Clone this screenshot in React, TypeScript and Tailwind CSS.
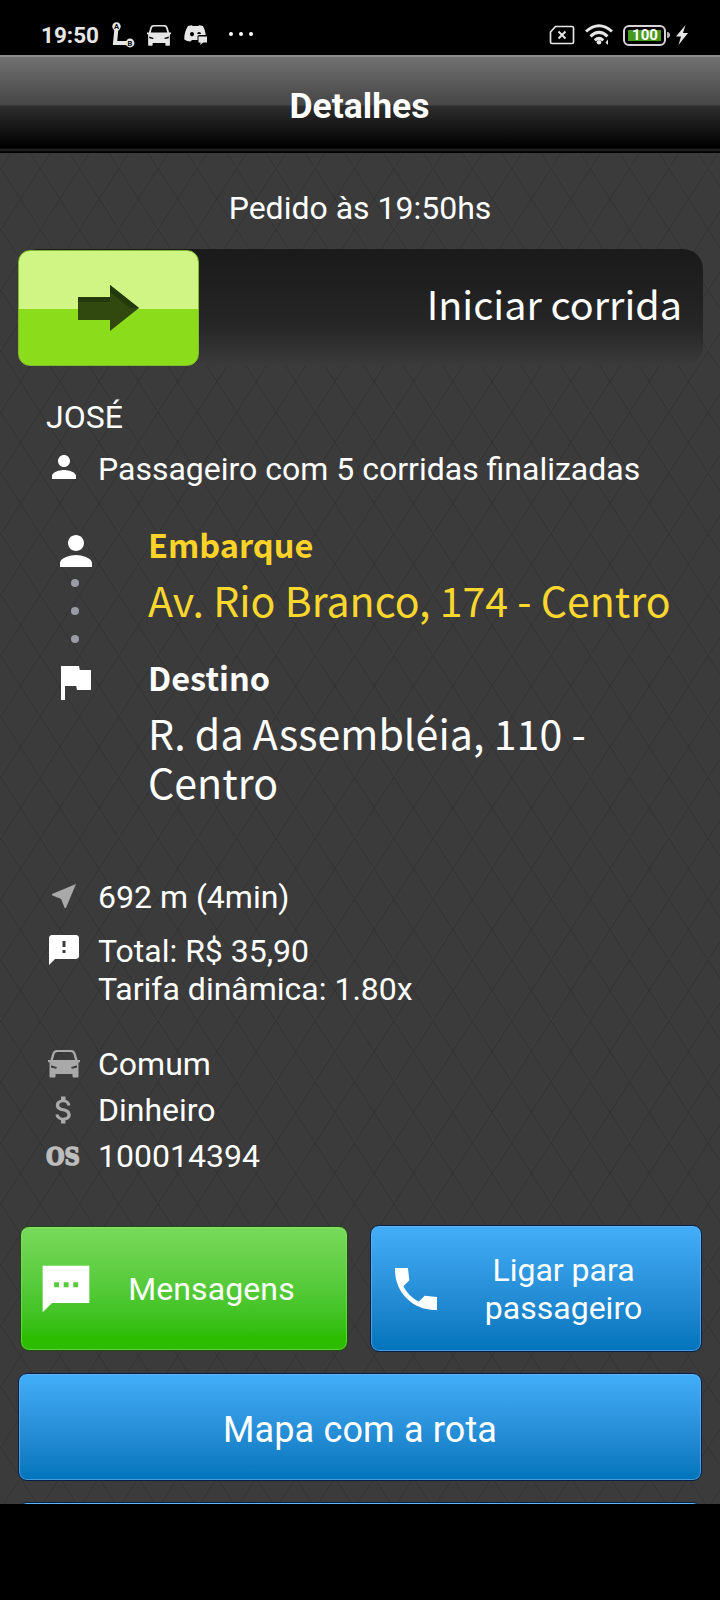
import React from "react";
import {
  MdPerson,
  MdFlag,
  MdNearMe,
  MdAttachMoney,
  MdFeedback,
} from "react-icons/md";

const roboto = "font-['Roboto',sans-serif]";
const source = "font-['Noto_Sans_CJK_SC',sans-serif]";

type IconProps = {
  className: string;
};

const Car = ({ className }: IconProps) => (
  <svg viewBox="0 0 32 28" className={className} fill="currentColor">
    <path
      fillRule="evenodd"
      d="M9 0h14c3 0 4 1.500 5 4.500l1.500 5.500H32v2l-1.500.6V26.500q0 1-1 1h-4q-1 0-1-1V24H7.500v2.500q0 1-1 1h-4q-1 0-1-1V12.600L0 12v-2h2.500L4 4.500C5 1.500 6 0 9 0zM9.500 2C7.500 2 7 3 6.400 4.600L5 10h22l-1.400-5.400C25 3 24.500 2 22.500 2zM3 15.200v2.300l5 1.200 1-1.500zM29 15.200v2.300l-5 1.200-1-1.500z"
    />
  </svg>
);

const Sms = ({ className }: IconProps) => (
  <svg viewBox="0 0 24 24" className={className} fill="currentColor">
    <path d="M22 2H2v20l4-4h16V2zM9 11.200H6.900V9.100H9zm4.100 0H11V9.100h2.100zm4.100 0h-2.100V9.100h2.100z" fillRule="evenodd" />
  </svg>
);

const Phone = ({ className }: IconProps) => (
  <svg viewBox="0 0 24 24" className={className} fill="currentColor">
    <path d="M21 15.460l-5.270-.610-2.520 2.520c-2.830-1.440-5.150-3.750-6.590-6.590l2.530-2.530L8.540 3H3.030C2.450 13.180 10.820 21.550 21 20.970v-5.510z" />
  </svg>
);

const StatusBar = () => (
  <div className="flex h-[55px] shrink-0 items-center bg-black pt-[15px] pr-8 pl-[41px] text-[#e6e6e6]">
    <span className="w-[59px] text-[22.5px] leading-none font-bold whitespace-nowrap">19:50</span>
    <svg viewBox="0 0 24 26" className="ml-[11px] h-[26px] w-6">
      <path d="M5.500 6L4 21H19" fill="none" stroke="currentColor" strokeWidth="4" />
      <circle cx="5.500" cy="4.500" r="4.200" fill="currentColor" />
      <circle cx="19" cy="21" r="4.400" fill="currentColor" />
      <text x="5.500" y="7.200" textAnchor="middle" fontSize="7.500" fontWeight="700" fill="#000">A</text>
      <text x="19" y="23.700" textAnchor="middle" fontSize="7.500" fontWeight="700" fill="#000">B</text>
    </svg>
    <Car className="ml-3 h-[21px] w-6" />
    <svg viewBox="0 0 24 20" className="ml-[13px] h-5 w-6" fill="currentColor">
      <path fillRule="evenodd" d="M4 1L7.500.2 9 1h5l1.500-.8L19 1q2 3.500 2.800 9H15q-1.500 0-1.500 1.500v3.500H8l-1.500 1.600Q3 16.600.3 14.500 0 7 4 1zM8 7a2 2.200 0 1 0 .01 0zM15 7a2 2 0 0 0-1.800 2h3.800a2 2 0 0 0-2-2z" />
      <path d="M14.500 11.500h8.500v6h-4l-2.500 2.500v-2.500h-2z" />
    </svg>
    <div className="-mt-0.5 ml-[21px] flex gap-1.5">
      <i className="h-1 w-1 rounded-full bg-white" />
      <i className="h-1 w-1 rounded-full bg-white" />
      <i className="h-1 w-1 rounded-full bg-white" />
    </div>
    <svg viewBox="0 0 26 20" className="ml-auto h-5 w-[26px]" fill="none" stroke="currentColor" strokeWidth="1.700">
      <path d="M6.500 1.500H23q1.500 0 1.500 1.500v14q0 1.500-1.500 1.500H3Q1.500 18.500 1.500 17V7z" />
      <path d="M9.500 6.500l7 7M16.500 6.500l-7 7" strokeWidth="2" />
    </svg>
    <svg viewBox="0 0 28 22" className="ml-[10px] h-[22px] w-7" fill="none" stroke="currentColor" strokeWidth="3">
      <path d="M1 7.500Q14-4 27 7.500M5.500 12.300Q14 4.500 22.500 12.300M9.800 16.300Q14 12.500 18.200 16.300" />
      <circle cx="14" cy="18.300" r="2.300" fill="currentColor" stroke="none" />
      <path d="M23 15.500v5.500l-2.500-2.500z" fill="currentColor" stroke="none" />
    </svg>
    <div className="ml-[10px] flex h-[21px] w-[43px] items-center rounded-[6px] border-[2.5px] border-[#d9d3d9] p-[3px]">
      <span className="h-full w-full bg-[#46991a] pl-px text-center text-[15px] leading-[11px] font-bold text-white">
        100
      </span>
    </div>
    <i className="ml-px h-1.5 w-[3px] rounded-r-sm bg-[#bdb7bd]" />
    <svg viewBox="0 0 12 20" className="ml-[6px] h-5 w-3" fill="currentColor">
      <path d="M9.500 0L0 11.500h5L2.500 20 12 8H7z" />
    </svg>
  </div>
);

const Header = () => (
  <header className="flex h-[98px] shrink-0 items-center justify-center border-t-2 border-[#8c8c8c] bg-[linear-gradient(to_bottom,#717171_0%,#464646_50%,#2e2e2e_51%,#000_94%,#000_95%,#222_96%,#222_97%,#000_99%)]">
    <h1 className="pt-[3px] pr-px text-[35.5px] leading-none font-bold text-white">Detalhes</h1>
  </header>
);

const Pattern = () => (
  <svg className="absolute inset-0 h-full w-full">
    <defs>
      <pattern id="argyle" x="20.500" y="45.300" width="39.300" height="60.900" patternUnits="userSpaceOnUse">
        <path d="M0 0L39.300 60.900M39.300 0L0 60.900" stroke="#333333" strokeWidth="1.300" />
        <path d="M1.200 0L40.500 60.900M38.100 0L-1.200 60.900" stroke="#404040" strokeWidth=".6" />
      </pattern>
    </defs>
    <rect width="100%" height="100%" fill="url(#argyle)" />
  </svg>
);

type InfoRowProps = {
  icon: React.ReactNode;
  className?: string;
  children: React.ReactNode;
};

const InfoRow = ({ icon, className = "", children }: InfoRowProps) => (
  <div className={`flex text-[32px] leading-[38px] whitespace-nowrap ${className}`}>
    <div className="flex h-[38px] w-[52px] shrink-0 items-center text-[#a9a9a9]">{icon}</div>
    <div>{children}</div>
  </div>
);

const blueButton =
  "rounded-[9px] border border-[#04204a] bg-linear-to-b from-[#43aef9] to-[#0074bb] shadow-[inset_0_0_0_1px_rgba(120,180,240,0.6)]";

export default function App() {
  return (
    <div className={`flex h-[1600px] w-[720px] flex-col overflow-hidden bg-black text-white ${roboto}`}>
      <StatusBar />
      <Header />
      <main className="relative h-[1351px] overflow-hidden bg-[#3b3b3b]">
        <Pattern />
        <div className="relative flex flex-col px-[18px]">
          <p className="mt-[36px] text-center text-[32px] leading-[38px]">Pedido às 19:50hs</p>

          <div className="mt-[22px] -mr-px flex h-[117px] items-center justify-between rounded-[20px] bg-linear-to-b from-[#1a1a1a] via-[#262626] via-65% to-[#3b3b3b] pr-[21px]">
            <div className="flex h-[116px] w-[181px] items-center justify-center rounded-[12px] border border-[#7fbd2c] bg-[linear-gradient(to_bottom,#d1f585_51%,#8bdd1c_51%)]">
              <svg viewBox="0 0 62 48" className="h-12 w-[62px]">
                <path d="M0 13H32V1L61 24L32 47V36H0z" fill="#31490f" />
                <path d="M0 13H32V1L61 24H52L32 8V18H0z" fill="#243a0c" />
              </svg>
            </div>
            <span className={`pb-[9px] text-[39.5px] leading-none ${source}`}>Iniciar corrida</span>
          </div>

          <div className="mt-[32px] pl-7">
            <p className="text-[32px] leading-[38px]">JOSÉ</p>
            <InfoRow className="mt-[14px]" icon={<MdPerson className="-mt-1 h-9 w-9 text-white" />}>
              Passageiro com 5 corridas finalizadas
            </InfoRow>
          </div>

          <div className="mt-[32px] flex">
            <div className="flex w-[130px] shrink-0 flex-col items-center pr-[16px]">
              <MdPerson className="mt-[7px] ml-[2px] h-12 w-12" />
              <div className="mt-1 flex flex-col gap-5">
                <i className="h-2 w-2 rounded-full bg-[#9b9ba8]" />
                <i className="h-2 w-2 rounded-full bg-[#9b9ba8]" />
                <i className="h-2 w-2 rounded-full bg-[#9b9ba8]" />
              </div>
              <MdFlag className="mt-[15px] h-12 w-12" />
            </div>
            <div className={`text-[41.1px] leading-[49px] ${source}`}>
              <h2 className="text-[32.5px] leading-[48px] font-bold text-[#fdd328]">Embarque</h2>
              <p className="mt-[7px] whitespace-nowrap text-[#f9d72f]">Av. Rio Branco, 174 - Centro</p>
              <h2 className="mt-[29px] text-[32.5px] leading-[48px] font-bold">Destino</h2>
              <p className="mt-[7px] tracking-[0.05px]">
                R. da Assembléia, 110 -
                <br />
                Centro
              </p>
            </div>
          </div>

          <div className="mt-[72px] pl-7">
            <InfoRow icon={<MdNearMe className="-mt-0.5 h-8 w-9" />}>692 m (4min)</InfoRow>
            <InfoRow className="mt-4" icon={<MdFeedback className="-mt-0.5 h-9 w-9 text-white" />}>
              Total: R$ 35,90
              <br />
              Tarifa dinâmica: 1.80x
            </InfoRow>
            <InfoRow className="mt-[37px]" icon={<Car className="ml-[2px] h-7 w-8" />}>
              Comum
            </InfoRow>
            <InfoRow className="mt-2" icon={<MdAttachMoney className="h-9 w-9" />}>
              Dinheiro
            </InfoRow>
            <InfoRow
              className="mt-2"
              icon={
                <span className="origin-left scale-x-[0.85] pt-px font-['DejaVu_Serif',serif] text-[25px] font-bold text-[#bdbdbd] [-webkit-text-stroke:1.5px_#bdbdbd]">
                  OS
                </span>
              }
            >
              100014394
            </InfoRow>
          </div>

          <div className="mt-[50px] flex h-[127px] gap-[22px] text-[32px] leading-[38px]">
            <button className="mt-px ml-[2px] flex h-[125px] w-[328px] items-center rounded-[9px] border border-[#1b4a0c] bg-linear-to-b from-[#79da5b] to-[#2cbd00] to-90% pl-[17px] shadow-[inset_0_0_0_1px_rgba(150,230,120,0.5)]">
              <Sms className="h-14 w-14" />
              <span className="flex-1 pt-px pr-[18px] tracking-[0.1px]">Mensagens</span>
            </button>
            <button className={`flex h-[127px] w-[332px] items-center pl-[17px] ${blueButton}`}>
              <Phone className="h-14 w-14" />
              <span className="flex-1 pt-px pr-[50px] pl-8">Ligar para passageiro</span>
            </button>
          </div>
          <button className={`mt-[21px] h-[108px] pt-[5px] text-[36px] tracking-[0.15px] ${blueButton}`}>
            Mapa com a rota
          </button>
          <div className={`mt-[21px] h-[108px] ${blueButton}`} />
        </div>
      </main>
    </div>
  );
}
